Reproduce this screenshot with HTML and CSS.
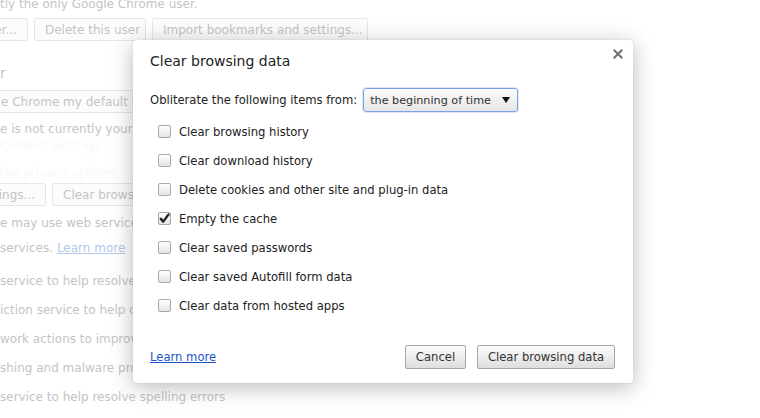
FILE: index.html
```html
<!DOCTYPE html>
<html>
<head>
<meta charset="utf-8">
<link rel="stylesheet" href="styles.css">
</head>
<body>
<div class="page">
  <div class="bg-line first">tly the only Google Chrome user.</div>
  <div class="bg-buttons row1">
    <span class="bg-btn b1">er...</span>
    <span class="bg-btn b2">Delete this user</span>
    <span class="bg-btn b3">Import bookmarks and settings...</span>
  </div>
  <div class="under">
    <div class="bg-line heading">r</div>
    <div class="bg-buttons row2">
      <span class="bg-btn b4">e Chrome my default br</span>
    </div>
    <div class="bg-line l3">e is not currently your</div>
    <div class="bg-line faint l4">Content settings</div>
    <div class="bg-line faint l5">the privacy options</div>
    <div class="bg-buttons row3">
      <span class="bg-btn b5">ings...</span>
      <span class="bg-btn b6">Clear browsi</span>
    </div>
    <div class="bg-line l6">e may use web services</div>
    <div class="bg-line l7">services. <span class="bg-link">Learn more</span></div>
    <div class="bg-line l8">service to help resolve</div>
    <div class="bg-line l9">iction service to help co</div>
    <div class="bg-line l9">work actions to improv</div>
    <div class="bg-line l9">shing and malware prot</div>
  </div>
  <div class="bg-line l9">service to help resolve spelling errors</div>
</div>

<div class="dialog">
  <div class="dlg-head">
    <h1 class="dlg-title">Clear browsing data</h1>
    <span class="dlg-close"><svg viewBox="0 0 10 10" width="10" height="10"><path d="M1.5 1.5 L8.5 8.5 M8.5 1.5 L1.5 8.5" stroke="#757575" stroke-width="2.2" stroke-linecap="square"/></svg></span>
  </div>
  <div class="from-row">
    <span class="from-label">Obliterate the following items from:</span>
    <span class="select">the beginning of time<span class="arrow"></span></span>
  </div>
  <ul class="items">
    <li class="item"><span class="cb"></span>Clear browsing history</li>
    <li class="item"><span class="cb"></span>Clear download history</li>
    <li class="item"><span class="cb"></span>Delete cookies and other site and plug-in data</li>
    <li class="item"><span class="cb checked"><svg viewBox="0 0 13 13" width="13" height="13"><path d="M2.8 6.8 L5.2 9.6 L10.6 2.4" fill="none" stroke="#222" stroke-width="2.4" stroke-linecap="round" stroke-linejoin="round"/></svg></span>Empty the cache</li>
    <li class="item"><span class="cb"></span>Clear saved passwords</li>
    <li class="item"><span class="cb"></span>Clear saved Autofill form data</li>
    <li class="item"><span class="cb"></span>Clear data from hosted apps</li>
  </ul>
  <div class="dlg-foot">
    <a class="learn" href="#">Learn more</a>
    <div class="actions">
      <span class="btn cancel">Cancel</span>
      <span class="btn primary">Clear browsing data</span>
    </div>
  </div>
</div>
</body>
</html>
```

FILE: styles.css
```css
html, body {
  margin: 0;
  padding: 0;
  width: 760px;
  height: 418px;
  overflow: hidden;
  background: #fff;
  font-family: "DejaVu Sans", "Liberation Sans", sans-serif;
}

.page {
  font-size: 12px;
  color: #c4c4c4;
  position: relative;
  overflow: hidden;
  height: 418px;
}

.under {
  width: 133px;
  overflow: hidden;
}

.bg-line {
  white-space: nowrap;
  line-height: 16px;
  height: 16px;
}

.bg-line.first { margin-top: -4px; }
.bg-line.heading { margin-top: 24px; font-size: 14px; }
.bg-line.l3 { margin-top: 8px; }
.bg-line.faint { color: #f8f8f8; }
.bg-line.l4 { margin-top: 1px; }
.bg-line.l5 { margin-top: 11px; }
.bg-line.l6 { margin-top: 9px; }
.bg-line.l7 { margin-top: 9px; }
.bg-line.l8 { margin-top: 17px; }
.bg-line.l9 { margin-top: 13px; }

.bg-link { color: #b3c6ec; text-decoration: underline; }

.bg-buttons {
  display: flex;
  gap: 6px;
  white-space: nowrap;
}
.bg-buttons.row1 { margin-top: 6px; }
.bg-buttons.row2 { margin-top: 9px; }
.bg-buttons.row3 { margin-top: 2px; }

.bg-btn {
  display: inline-flex;
  align-items: center;
  height: 21px;
  padding: 0 10px;
  border: 1px solid #e6e6e6;
  border-radius: 2px;
  background: #fcfcfc;
  color: #c4c4c4;
  font-size: 12px;
  flex: none;
  overflow: hidden;
}
.bg-btn.b1 { margin-left: -14px; width: 20px; justify-content: flex-end; }
.bg-btn.b2 { width: 90px; }
.bg-btn.b3 { width: 194px; }
.bg-btn.b4 { margin-left: -10px; width: 180px; }
.bg-btn.b5 { margin-left: -10px; width: 34px; justify-content: flex-end; }
.bg-btn.b6 { width: 140px; }

/* Dialog */
.dialog {
  position: absolute;
  left: 133px;
  top: 40px;
  width: 500px;
  height: 343px;
  box-sizing: border-box;
  background: #fff;
  border-radius: 3px;
  box-shadow: 0 4px 22px rgba(0,0,0,0.28), 0 0 1px rgba(0,0,0,0.25);
  padding: 0 18px 14px 17px;
  display: flex;
  flex-direction: column;
  color: #333;
  font-size: 11.6px;
}

.dlg-head {
  display: flex;
  justify-content: space-between;
  align-items: flex-start;
  height: 48px;
}

.dlg-title {
  margin: 12px 0 0 0;
  font-size: 14px;
  font-weight: normal;
  color: #222;
  line-height: 18px;
}

.dlg-close {
  margin: 9px -8px 0 0;
  line-height: 0;
}

.from-row {
  display: flex;
  align-items: center;
  gap: 6px;
  height: 24px;
}

.from-label { color: #222; }

.select {
  display: inline-flex;
  align-items: center;
  box-sizing: border-box;
  height: 24px;
  width: 155px;
  padding: 0 7px 0 6px;
  border: 1px solid #78a5e3;
  border-radius: 3px;
  background: linear-gradient(#fbfbfb, #e6e6e6);
  box-shadow: 0 0 0 1px rgba(120,165,227,0.25);
  color: #333;
  justify-content: space-between;
  white-space: nowrap;
  font-size: 11.2px;
}

.arrow {
  width: 0;
  height: 0;
  border-left: 4.5px solid transparent;
  border-right: 4.5px solid transparent;
  border-top: 6px solid #111;
}

.items {
  list-style: none;
  margin: 5px 0 0 8px;
  padding: 0;
}

.item {
  display: flex;
  align-items: center;
  height: 29px;
  color: #222;
}

.cb {
  box-sizing: border-box;
  width: 13px;
  height: 13px;
  border: 1px solid #a9a9a9;
  border-radius: 2px;
  background: linear-gradient(#fff, #e4e4e4);
  margin-right: 8px;
  position: relative;
  flex: none;
}
.cb svg {
  position: absolute;
  left: -1px;
  top: -1px;
}

.dlg-foot {
  margin-top: auto;
  display: flex;
  justify-content: space-between;
  align-items: center;
}

.learn {
  color: #1a55c8;
  text-decoration: underline;
}

.actions {
  display: flex;
  gap: 11px;
}

.btn {
  display: inline-flex;
  align-items: center;
  justify-content: center;
  box-sizing: border-box;
  height: 24px;
  border: 1px solid #a6a6a6;
  border-radius: 2px;
  background: linear-gradient(#fcfcfc, #dedede);
  color: #333;
}
.btn.cancel { width: 61px; }
.btn.primary { width: 138px; }
```
